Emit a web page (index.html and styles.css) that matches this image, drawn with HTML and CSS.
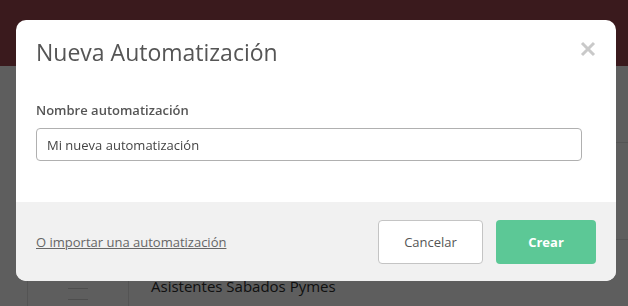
FILE: index.html
```html
<!DOCTYPE html>
<html lang="es">

<head>
    <meta charset="UTF-8">
    <meta name="viewport" content="width=device-width, initial-scale=1.0">
    <title>Nueva Automatización</title>
    <link rel="stylesheet" href="styles.css">
</head>

<body>
    <!-- Fondo de la pagina -->
    <header class="topbar"></header>
    <div class="page">
        <div class="row"></div>
        <div class="row row-mid"></div>
        <div class="row row-last">
            <div class="thumb">
                <span class="thumb-mark"></span>
                <span class="thumb-box"></span>
            </div>
            <p class="row-title">Asistentes Sabados Pymes</p>
        </div>
    </div>

    <div class="overlay"></div>

    <!-- Modal -->
    <div class="modal">
        <div class="modal-header">
            <h2>Nueva Automatización</h2>
            <button class="close-btn" aria-label="Cerrar">
                <svg width="16" height="16" viewBox="0 0 16 16">
                    <path d="M2 2 L14 14 M14 2 L2 14" stroke="#c9c9c9" stroke-width="3" />
                </svg>
            </button>
        </div>
        <div class="modal-body">
            <label class="field-label" for="name">Nombre automatización</label>
            <input id="name" class="field-input" type="text" value="Mi nueva automatización">
        </div>
        <div class="modal-footer">
            <a href="#" class="import-link">O importar una automatización</a>
            <div class="actions">
                <button class="btn btn-cancel">Cancelar</button>
                <button class="btn btn-create">Crear</button>
            </div>
        </div>
    </div>
</body>

</html>
```

FILE: styles.css
```css
body {
    font-family: "Open Sans", Arial, sans-serif;
    margin: 0;
    padding: 0;
    background-color: #bcbcbc;
    width: 628px;
    height: 306px;
    overflow: hidden;
}

.topbar {
    height: 66px;
    background-color: #74343a;
}

.page {
    padding-left: 27px;
}

.row {
    height: 76px;
    border-bottom: 1px solid #a8a8a8;
    border-left: 1px solid #a8a8a8;
}

.row-mid {
    height: 96px;
}

.row-last {
    display: flex;
    align-items: flex-start;
    height: 70px;
    border-bottom: none;
}

.thumb {
    width: 100px;
    height: 70px;
    border-right: 1px solid #a8a8a8;
    display: flex;
    flex-direction: column;
    align-items: center;
    justify-content: flex-end;
}

.thumb-mark {
    width: 20px;
    height: 10px;
    border-top: 1px solid #9c9c9c;
    border-bottom: 1px solid #9c9c9c;
    margin-bottom: 6px;
}

.thumb-box {
    width: 70px;
    height: 4px;
    background-color: #4a4a55;
}

.row-title {
    margin: 36px 0 0 22px;
    font-size: 15px;
    color: #222;
}

.overlay {
    position: fixed;
    inset: 0;
    background-color: rgba(0, 0, 0, 0.5);
}

.modal {
    position: fixed;
    top: 20px;
    left: 16px;
    width: 600px;
    height: 261px;
    background-color: #fff;
    border-radius: 10px;
    overflow: hidden;
    display: flex;
    flex-direction: column;
}

.modal-header {
    display: flex;
    justify-content: space-between;
    align-items: flex-start;
    padding: 16px 20px 0 20px;
}

.modal-header h2 {
    margin: 0;
    font-size: 23px;
    font-weight: 500;
    color: #555;
    line-height: 32px;
}

.close-btn {
    background: none;
    border: none;
    padding: 0;
    margin: 5px 0 0 0;
    cursor: pointer;
    line-height: 0;
}

.modal-body {
    padding: 33px 20px 0 20px;
    display: flex;
    flex-direction: column;
    flex: 1;
}

.field-label {
    font-size: 13px;
    font-weight: 600;
    color: #555;
    line-height: 18px;
    margin-bottom: 9px;
}

.field-input {
    box-sizing: border-box;
    width: 546px;
    height: 33px;
    border: 1px solid #b0b0b0;
    border-radius: 4px;
    padding: 0 10px;
    font-family: "Open Sans", Arial, sans-serif;
    font-size: 13px;
    color: #444;
}

.modal-footer {
    height: 79px;
    box-sizing: border-box;
    background-color: #f1f1f1;
    display: flex;
    justify-content: space-between;
    align-items: center;
    padding: 0 20px;
}

.import-link {
    font-size: 13px;
    color: #666;
    text-decoration: underline;
}

.actions {
    display: flex;
    gap: 13px;
}

.btn {
    height: 44px;
    border-radius: 4px;
    font-family: "Open Sans", Arial, sans-serif;
    font-size: 13px;
    cursor: pointer;
}

.btn-cancel {
    width: 105px;
    background-color: #fff;
    border: 1px solid #c4c4c4;
    color: #555;
}

.btn-create {
    width: 100px;
    background-color: #5cc896;
    border: none;
    color: #fff;
    font-weight: 700;
}
```
